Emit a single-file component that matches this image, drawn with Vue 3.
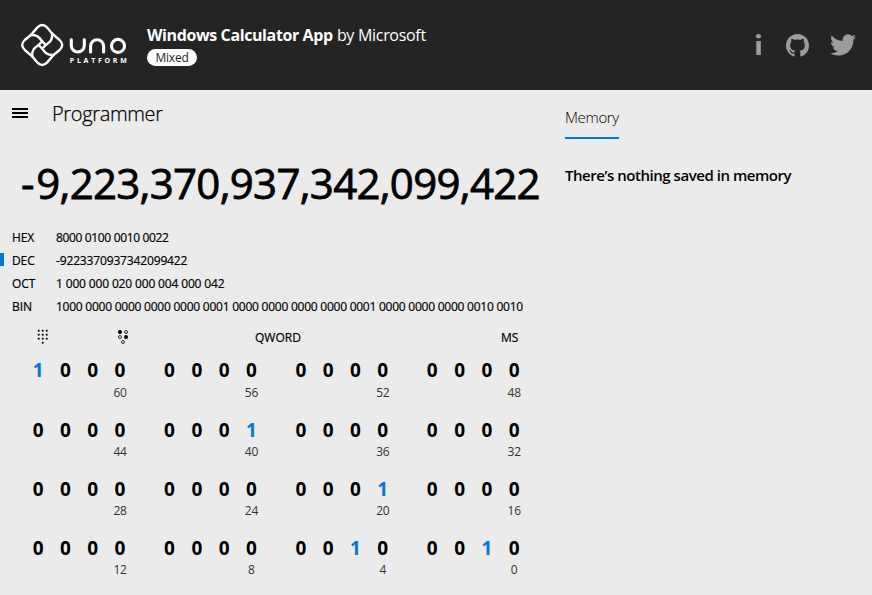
<script setup>
const radices = [
  { name: 'HEX', value: '8000 0100 0010 0022', cls: 'hex' },
  { name: 'DEC', value: '-9223370937342099422', cls: 'dec', active: true },
  { name: 'OCT', value: '1 000 000 020 000 004 000 042', cls: 'oct' },
  { name: 'BIN', value: '1000 0000 0000 0000 0000 0001 0000 0000 0000 0000 0001 0000 0000 0000 0010 0010', cls: 'bin' },
]

const nibbles = radices[3].value.split(' ')
const rows = [0, 1, 2, 3].map((r) =>
  [0, 1, 2, 3].map((c) => {
    const i = r * 4 + c
    return { bits: nibbles[i].split(''), label: 60 - i * 4 }
  })
)
</script>

<template>
  <div class="page">
    <header class="header">
      <svg class="logo" width="108" height="46" viewBox="0 0 108 46">
        <g fill="none" stroke="#fff" stroke-width="2.4" stroke-linejoin="round" stroke-linecap="round">
          <g v-for="a in [0, 90, 180, 270]" :key="a" :transform="`translate(22.2 23) rotate(${a})`">
            <path d="M-11.3 -10 L-5 -17.4 Q0 -22.6 5 -17.4 L10 -11.3" />
            <path d="M-11.3 -10 C-5 -10.4 -3 -8 0 -3.6 L3.6 0" />
          </g>
        </g>
        <g fill="none" stroke="#fff" stroke-width="3.1" stroke-linecap="round">
          <path d="M51.3 17.6 V23.5 A6.5 6.5 0 0 0 64.3 23.5 V17.6" />
          <path d="M70.6 30 V24.3 A6.5 6.5 0 0 1 83.6 24.3 V30" />
          <circle cx="98" cy="23.9" r="6.5" />
        </g>
        <text class="logo-sub" x="49.8" y="40.5" textLength="57">PLATFORM</text>
      </svg>
      <div class="titles">
        <div class="title"><b>Windows Calculator App</b> <span>by Microsoft</span></div>
        <span class="pill">Mixed</span>
      </div>
      <nav class="links">
        <svg width="8" height="22" viewBox="0 0 8 22" fill="#9c9c9c">
          <ellipse cx="4.5" cy="2.2" rx="2.6" ry="2.2" />
          <rect x="2.3" y="7" width="4.5" height="14" />
        </svg>
        <svg class="github" width="23" height="23" viewBox="0 0 16 16" fill="#9c9c9c">
          <path d="M8 0C3.58 0 0 3.58 0 8c0 3.54 2.29 6.53 5.47 7.59.4.07.55-.17.55-.38 0-.19-.01-.82-.01-1.49-2.01.37-2.53-.49-2.69-.94-.09-.23-.48-.94-.82-1.13-.28-.15-.68-.52-.01-.53.63-.01 1.08.58 1.23.82.72 1.21 1.87.87 2.33.66.07-.52.28-.87.51-1.07-1.78-.2-3.64-.89-3.64-3.95 0-.87.31-1.59.82-2.15-.08-.2-.36-1.02.08-2.12 0 0 .67-.21 2.2.82.64-.18 1.32-.27 2-.27s1.36.09 2 .27c1.53-1.04 2.2-.82 2.2-.82.44 1.1.16 1.92.08 2.12.51.56.82 1.27.82 2.15 0 3.07-1.87 3.75-3.65 3.95.29.25.54.73.54 1.48 0 1.07-.01 1.93-.01 2.2 0 .21.15.46.55.38A8.01 8.01 0 0 0 16 8c0-4.42-3.58-8-8-8z" />
        </svg>
        <svg class="twitter" width="26" height="22" viewBox="0 2 24 20" fill="#9c9c9c">
          <path d="M23.95 4.57a10 10 0 0 1-2.82.77 4.96 4.96 0 0 0 2.16-2.72c-.95.55-2 .95-3.13 1.18a4.92 4.92 0 0 0-8.38 4.48C7.69 8.1 4.07 6.13 1.64 3.16a4.82 4.82 0 0 0-.67 2.48c0 1.71.87 3.21 2.19 4.1a4.9 4.9 0 0 1-2.23-.62v.06a4.92 4.92 0 0 0 3.95 4.83 5 5 0 0 1-2.21.08 4.94 4.94 0 0 0 4.6 3.42A9.87 9.87 0 0 1 0 19.54a13.99 13.99 0 0 0 7.56 2.21c9.05 0 14-7.5 14-13.98 0-.21 0-.42-.02-.63a9.94 9.94 0 0 0 2.41-2.57z" />
        </svg>
      </nav>
    </header>

    <div class="body">
      <main class="calc">
        <div class="mode">
          <svg width="16" height="10" viewBox="0 0 16 10">
            <path d="M0 0H16V2H0ZM0 4H16V6H0ZM0 8H16V10H0Z" />
          </svg>
          <h1>Programmer</h1>
        </div>
        <div class="result"><span class="sign">-</span>9,223,370,937,342,099,422</div>
        <div v-for="r in radices" :key="r.name" class="radix" :class="{ active: r.active }">
          <span class="mark"></span>
          <span class="name">{{ r.name }}</span>
          <span class="value" :class="r.cls">{{ r.value }}</span>
        </div>
        <div class="tools">
          <svg class="tool" width="12" height="16" viewBox="0 0 12 16">
            <template v-for="y in 3" :key="y">
              <rect v-for="x in 3" :key="x" :x="x * 4 - 3.2" :y="y * 4 - 3.2" width="1.8" height="1.8" />
            </template>
            <rect x="4.8" y="12.8" width="1.8" height="1.8" />
          </svg>
          <svg class="tool" width="12" height="16" viewBox="0 0 12 16">
            <circle cx="3" cy="3" r="2" />
            <circle cx="9" cy="8" r="2" />
            <g fill="none" stroke="#000" stroke-width=".8">
              <circle cx="9" cy="3" r="1.5" />
              <circle cx="3" cy="8" r="1.5" />
              <circle cx="6" cy="13" r="1.5" />
            </g>
          </svg>
          <span class="word">QWORD</span>
          <span class="ms">MS</span>
        </div>
        <div class="bits">
          <template v-for="row in rows">
            <div v-for="n in row" :key="n.label" class="nibble">
              <span v-for="(b, i) in n.bits" :key="i" class="bit" :class="{ on: b === '1' }">{{ b }}</span>
              <span class="index">{{ n.label }}</span>
            </div>
          </template>
        </div>
      </main>
      <aside class="memory">
        <div class="tab">Memory</div>
        <p>There’s nothing saved in memory</p>
      </aside>
    </div>
  </div>
</template>

<style>
body {
  margin: 0;
  background: #ebebeb;
}
</style>

<style scoped>
.page {
  width: 872px;
  height: 595px;
  overflow: hidden;
  background: #ebebeb;
  color: #000;
  font-family: 'Open Sans', 'Noto Sans', sans-serif;
  white-space: nowrap;
}
.header {
  display: flex;
  box-sizing: border-box;
  height: 90px;
  padding: 22px 16px 0 20px;
  background: #242424;
  color: #fff;
}
.logo {
  flex: none;
}
.logo-sub {
  fill: #fff;
  font-size: 7px;
  font-weight: 700;
}
.titles {
  padding: 2px 0 0 19px;
}
.title {
  height: 22px;
  font-size: 16px;
  line-height: 22px;
}
.title b {
  font-weight: 700;
  letter-spacing: -0.39px;
}
.title span {
  letter-spacing: -0.3px;
}
.pill {
  display: block;
  width: 50px;
  height: 17px;
  margin-top: 3px;
  border-radius: 9px;
  background: #fff;
  color: #242424;
  font-size: 12px;
  line-height: 17px;
  letter-spacing: -0.2px;
  text-align: center;
}
.links {
  display: flex;
  margin-left: auto;
  padding-top: 12px;
}
.github {
  margin-left: 24px;
}
.twitter {
  margin-left: 21px;
}
.body {
  display: flex;
}
.calc {
  width: 565px;
}
.mode {
  display: flex;
  height: 57px;
  padding-left: 12px;
}
.mode svg {
  margin-top: 18px;
}
.mode h1 {
  margin: 10px 0 0 24px;
  font-size: 20px;
  font-weight: 300;
  line-height: 28px;
  letter-spacing: -0.35px;
  -webkit-text-stroke: 0.25px #000;
}
.result {
  height: 79px;
  padding-left: 21px;
  font-size: 42px;
  line-height: 72px;
  letter-spacing: -0.72px;
  -webkit-text-stroke: 0.8px #000;
}
.sign {
  margin-right: 2.5px;
}
.radix {
  display: flex;
  align-items: center;
  height: 23px;
  font-size: 12px;
  line-height: 23px;
  -webkit-text-stroke: 0.2px #000;
}
.mark {
  width: 4px;
  height: 13px;
}
.active .mark {
  margin-top: -2px;
  background: #0078d7;
}
.name {
  width: 44px;
  padding-left: 8px;
  box-sizing: border-box;
  letter-spacing: -0.1px;
}
.value {
  padding-left: 8px;
  letter-spacing: -0.35px;
}
.dec,
.oct {
  letter-spacing: -0.15px;
}
.bin {
  letter-spacing: -0.24px;
}
.tools {
  display: flex;
  height: 38px;
  padding: 11px 0 0 37px;
  box-sizing: border-box;
  font-size: 12px;
  line-height: 17px;
}
.tool + .tool {
  margin-left: 68px;
}
.word,
.ms {
  flex: none;
  -webkit-text-stroke: 0.2px #000;
}
.word {
  width: 246px;
  padding-left: 126px;
}
.bits {
  display: grid;
  grid-template-columns: repeat(4, 109.2px);
  grid-auto-rows: 59.2px;
  column-gap: 22.2px;
  padding: 1.35px 0 0 24.5px;
}
.nibble {
  display: grid;
  grid-template-columns: repeat(4, 27.3px);
  grid-template-rows: 26.35px 18px;
  text-align: center;
}
.bit {
  font-size: 19px;
  font-weight: 700;
  line-height: 26px;
}
.bit.on {
  color: #0078d7;
}
.index {
  grid-column: 4;
  color: #333;
  font-size: 12px;
  line-height: 18px;
  letter-spacing: -0.2px;
}
.tab {
  width: 54px;
  height: 30px;
  margin-top: 17px;
  border-bottom: 2px solid #0078d7;
  font-size: 15px;
  font-weight: 300;
  line-height: 20px;
  letter-spacing: -0.35px;
}
.memory p {
  margin: 25px 0 0;
  font-size: 15px;
  font-weight: 600;
  line-height: 22px;
  letter-spacing: -0.46px;
}
</style>
